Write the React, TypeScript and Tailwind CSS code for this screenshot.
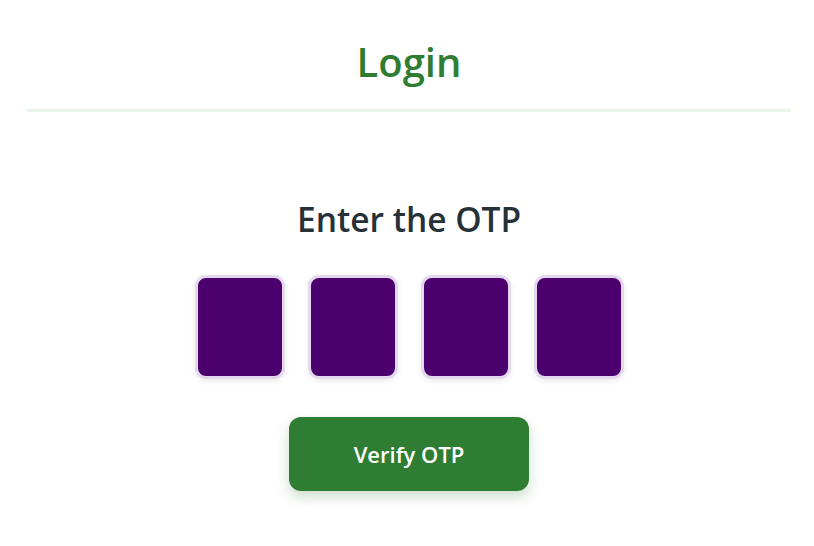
export default function App() {
  return (
    <main
      className="min-h-screen bg-white pl-[4px]"
      style={{ fontFamily: '"Open Sans", "Noto Sans", sans-serif' }}
    >
      <header className="mx-auto w-[764px] pt-[34px] pb-[19px] border-b-[3px] border-[#e9f4ea] text-center">
        <h1 className="text-[40px] leading-[56px] font-semibold text-[#2e7d32]">Login</h1>
      </header>

      <section className="flex flex-col items-center pt-[83px]">
        <h2 className="text-[33.5px] leading-[48px] font-semibold text-[#263238]">Enter the OTP</h2>

        <div className="mt-[32px] flex gap-[23px]">
          {[0, 1, 2, 3].map((i) => (
            <input
              key={i}
              type="text"
              maxLength={1}
              className="w-[90px] h-[104px] rounded-[11px] border-[3px] border-[#e4d8ee] bg-[#4b006e] text-white text-center text-3xl outline-none shadow-[0_2px_6px_rgba(0,0,0,0.08)]"
            />
          ))}
        </div>

        <button className="mt-[38px] w-[240px] h-[74px] rounded-[12px] bg-[#2e7d32] text-white text-[22px] font-semibold shadow-[0_6px_14px_rgba(46,125,50,0.25)]">
          Verify OTP
        </button>
      </section>
    </main>
  );
}
